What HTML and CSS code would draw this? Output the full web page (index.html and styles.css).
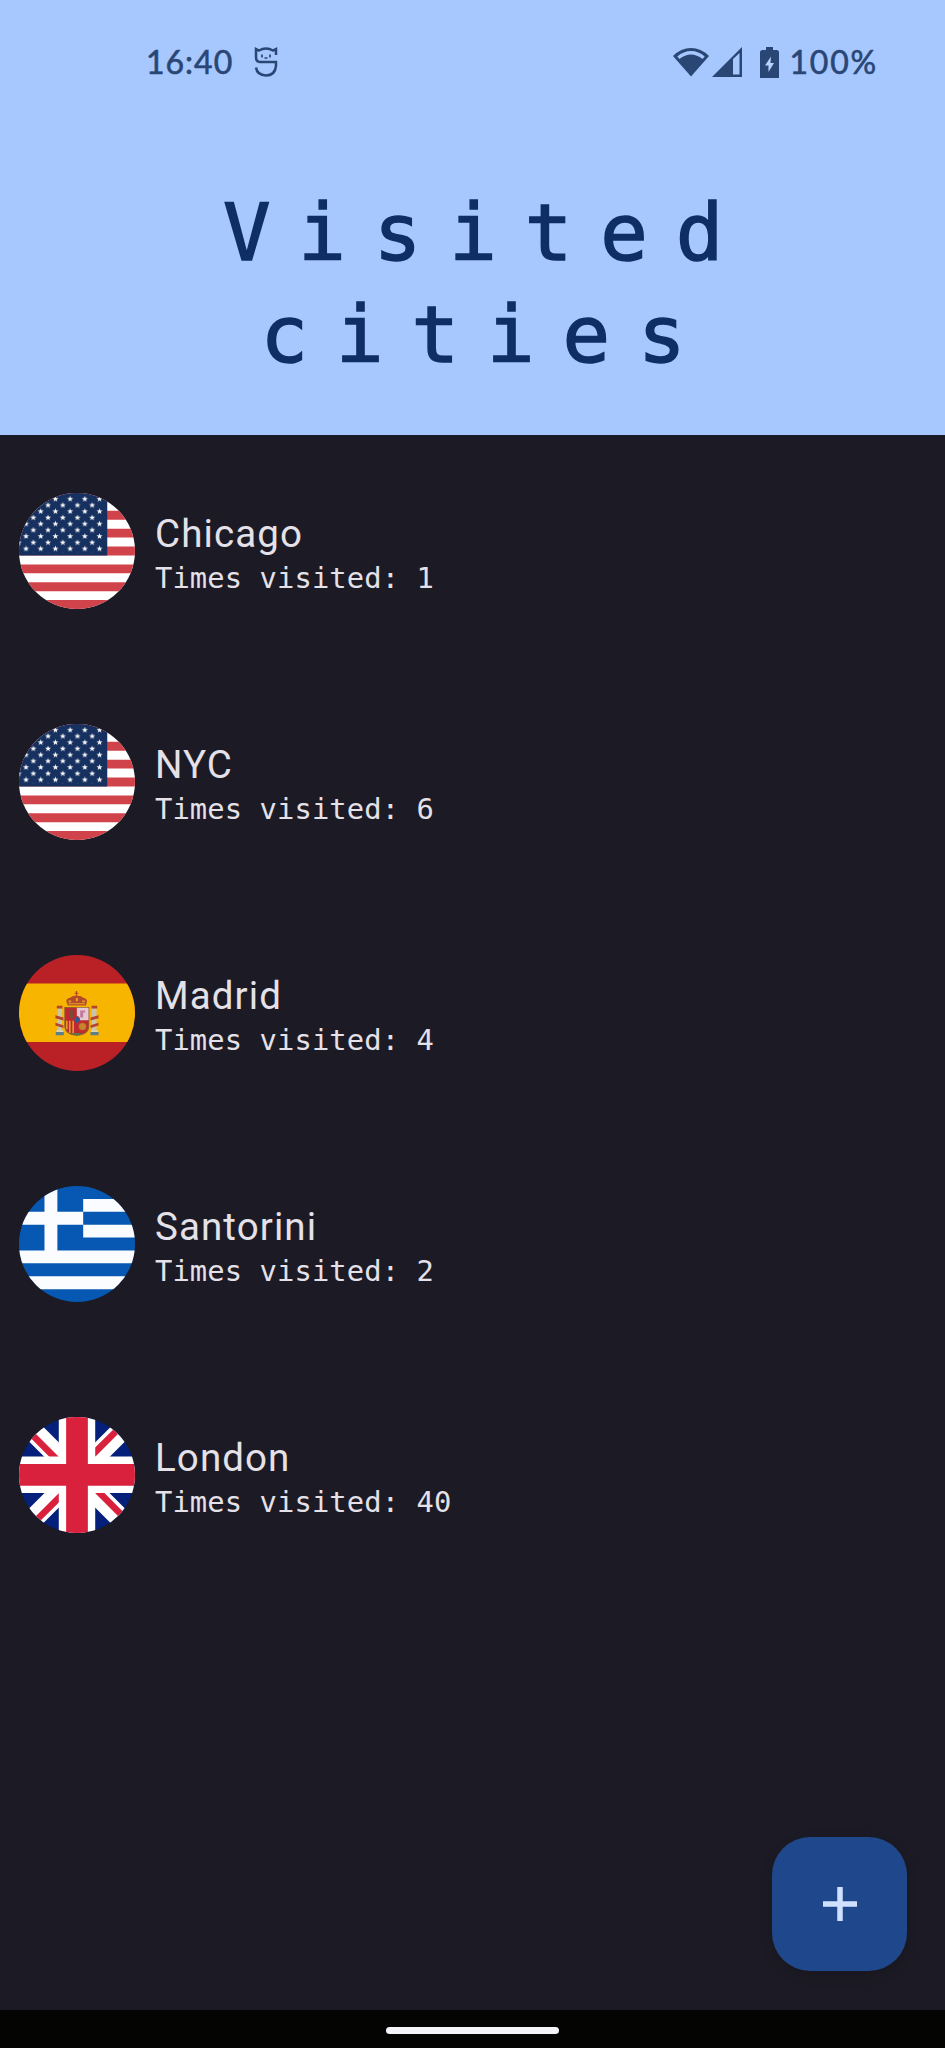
FILE: index.html
```html
<!DOCTYPE html>
<html lang="en">
<head>
<meta charset="utf-8">
<title>Visited cities</title>
<link rel="stylesheet" href="styles.css">
</head>
<body>
<svg width="0" height="0" class="defs" aria-hidden="true">
  <defs>
    <clipPath id="round"><circle cx="173.5" cy="173.5" r="173.5"/></clipPath>
    <path id="star" d="M0-9.500 2.300-3.100 9-3 3.700 1.200 5.600 7.800 0 3.900-5.600 7.800-3.700 1.200-9-3-2.300-3.100Z" fill="#fff"/>
    <pattern id="stars" width="44" height="37.2" x="-1" y="8.7" patternUnits="userSpaceOnUse">
      <use href="#star" x="22" y="9.3"/>
      <use href="#star" x="0" y="27.9"/>
      <use href="#star" x="44" y="27.9"/>
    </pattern>
    <symbol id="usa" viewBox="0 0 347 347">
      <g clip-path="url(#round)">
        <path fill="#fff" d="M0 0h347v347H0z"/>
        <path stroke="#d1434b" stroke-width="26.7" d="M0 13.3h347M0 66.700h347M0 120.100h347M0 173.500h347M0 226.900h347M0 280.300h347M0 333.700h347"/>
        <path fill="#16305f" d="M0 0h264v186.900H0z"/>
        <path fill="url(#stars)" d="M0 8h252v169H0z"/>
      </g>
    </symbol>
  </defs>
</svg>
<div class="screen">
  <header class="header">
    <div class="status">
      <div class="status-left">
        <span class="clock">16:40</span>
        <svg class="app-icon" viewBox="0 0 24 32" fill="none" stroke="#294674" stroke-width="2.500">
          <path d="M22 9V3L19 4.500Q12 0.500 5 4.500L2 3V11Q2 16 6 16H22V20Q21 29.500 12 29.500Q3 29 2 21.500"/>
          <path d="M8 8.500v3M16 8.500v3M10.500 12h3" stroke-width="1.700"/>
        </svg>
      </div>
      <div class="status-right">
        <svg class="wifi" viewBox="0 0 36 30">
          <path fill="#294674" d="M18 29.500 0 9Q8 1 18 1T36 9Z"/>
          <path fill="#a7c7ff" d="M4.300 9.500Q10.500 4 18 4T31.700 9.500L29.500 12Q24 7.500 18 7.500T6.500 12Z"/>
        </svg>
        <svg class="signal" viewBox="0 0 30 30">
          <path fill="#294674" fill-rule="evenodd" d="M0 30 30 0V30ZM21 12V27.500H27.500V6Z"/>
        </svg>
        <svg class="battery" viewBox="0 0 19 31">
          <path fill="#294674" d="M6 0h7v3h3.500Q19 3 19 5.500V31H0V5.500Q0 3 2.500 3H6Z"/>
          <path fill="#b9d2ff" d="M11 9.500 5 18.500h3.500V25L14 16h-3.500Z"/>
        </svg>
        <span class="percent">100%</span>
      </div>
    </div>
    <h1 class="title">Visited<br>cities</h1>
  </header>

  <main class="list">
    <article class="city">
      <svg class="flag"><use href="#usa"/></svg>
      <div class="info"><h2 class="name">Chicago</h2><p class="visits">Times visited: 1</p></div>
    </article>
    <article class="city">
      <svg class="flag"><use href="#usa"/></svg>
      <div class="info"><h2 class="name">NYC</h2><p class="visits">Times visited: 6</p></div>
    </article>
    <article class="city">
      <svg class="flag" viewBox="0 0 347 347">
        <g clip-path="url(#round)">
          <path fill="#b92126" d="M0 0h347v347H0z"/>
          <path fill="#f7b500" d="M0 85h347v175H0z"/>
          <!-- pillars -->
          <path fill="#c9c4ac" d="M115 160h14v70h-14zM218 160h14v70h-14z"/>
          <path fill="#b4442e" d="M113 152h17v8h-17zM217 152h17v8h-17zM109 180l24 7v9l-24-7zM238 180l-24 7v9l24-7zM109 203l24 7v8l-24-7zM238 203l-24 7v8l24-7z"/>
          <path fill="#5c7f8c" d="M110 230h24v10h-24zM214 230h24v10h-24z"/>
          <path fill="#d9d3b8" d="M112 225h20v5h-20zM216 225h20v5h-20z"/>
          <!-- crown -->
          <path fill="#b54a29" d="M146 151q-12-20 7-23 7-7 17-6v-6h-4v-3h4v-5h4v5h4v3h-4v6q12-1 18 6 18 3 8 23z"/>
          <path fill="#e5a329" d="M148 136h8v5h-8zM170 129h6v9h-6zM189 136h8v5h-8zM148 144h49v3h-49z"/>
          <!-- shield -->
          <path fill="#bd2832" stroke="#96602c" stroke-width="3" d="M137 157h72v54q0 27-36 29-36-2-36-29z"/>
          <path fill="#e2cbd1" d="M173 158h35v37h-35z"/>
          <path fill="#c477a0" d="M183 166h15v6h-6v15h-9z"/>
          <path stroke="#e09a2a" stroke-width="5" d="M143 197v25M152 197v36M162 197v38"/>
          <path fill="#7b4c35" d="M150 164h12v25h-12z"/>
          <circle cx="190" cy="214" r="13" fill="#c4862b" stroke="#bf342d" stroke-width="5"/>
          <path fill="#3f8753" d="M155 234h36l-18 7z"/>
          <ellipse cx="173" cy="194" rx="8" ry="10" fill="#275c99" stroke="#b82e38" stroke-width="3"/>
        </g>
      </svg>
      <div class="info"><h2 class="name">Madrid</h2><p class="visits">Times visited: 4</p></div>
    </article>
    <article class="city">
      <svg class="flag" viewBox="0 0 347 347">
        <g clip-path="url(#round)">
          <path fill="#0758b2" d="M0 0h347v347H0z"/>
          <path stroke="#fbfcff" stroke-width="38.600" d="M192 57.900h155M192 135h155M0 212h347M0 289.200h347M0 96.400h192M95.500 0v193"/>
        </g>
      </svg>
      <div class="info"><h2 class="name">Santorini</h2><p class="visits">Times visited: 2</p></div>
    </article>
    <article class="city">
      <svg class="flag" viewBox="0 0 347 347">
        <g clip-path="url(#round)">
          <path fill="#04207a" d="M0 0h347v347H0z"/>
          <path stroke="#fff" stroke-width="61" d="M0 0 347 347M347 0 0 347"/>
          <path fill="#d9203c" d="M0 0 173.500 173.500H145L0 28ZM347 0 173.500 173.500V145L320 0ZM347 347 173.500 173.500H202L347 319ZM0 347 173.500 173.500V202L27 347Z"/>
          <path stroke="#fff" stroke-width="109" d="M0 173H347M173.500 0V347"/>
          <path stroke="#d9203c" stroke-width="65" d="M0 173H347M173.500 0V347"/>
        </g>
      </svg>
      <div class="info"><h2 class="name">London</h2><p class="visits">Times visited: 40</p></div>
    </article>
  </main>

  <div class="actions">
    <button class="fab" aria-label="Add city">
      <svg class="plus" viewBox="0 0 34 34"><path stroke="#d0e1ff" stroke-width="5.500" d="M17 0v34M0 17h34"/></svg>
    </button>
  </div>
  <footer class="navbar"><div class="handle"></div></footer>
</div>
</body>
</html>
```
FILE: styles.css
```css
* { box-sizing: border-box; }
body { margin: 0; background: #1c1b25; }
.defs { display: block; height: 0; }
.screen { width: 945px; height: 2048px; display: flex; flex-direction: column; background: #1c1b25; overflow: hidden; }
.header { height: 435px; flex: none; background: #a7c7ff; color: #0f2e66; }
.status { height: 124px; padding: 0 67px 0 146px; display: flex; justify-content: space-between; align-items: center; font: 400 32px/40px Lato, sans-serif; color: #294674; -webkit-text-stroke: 0.600px #294674; }
.status-left, .status-right { display: flex; align-items: center; }
.clock { letter-spacing: 1px; }
.app-icon { width: 24px; height: 32px; margin-left: 21px; }
.wifi { width: 36px; height: 30px; }
.signal { width: 30px; height: 30px; margin-left: 3px; }
.battery { width: 19px; height: 31px; margin: 0 10px 0 18px; }
.percent { letter-spacing: 1.800px; }
.title { margin: 0; padding: 59px 0 0 29px; text-align: center; font: 400 79px/101.500px "DejaVu Sans Mono", monospace; letter-spacing: 27.900px; -webkit-text-stroke: 1.500px #0f2e66; }
.list { flex: 1; }
.city { height: 231px; padding-left: 19px; display: flex; align-items: center; gap: 20px; }
.flag { width: 116px; height: 116px; flex: none; }
.info { padding-top: 8px; color: #e5e1e9; }
.name { margin: 0; font: 400 38.500px/46px Roboto, sans-serif; letter-spacing: 1.100px; }
.visits { margin: 0; font: 400 28.800px/42px "DejaVu Sans Mono", monospace; letter-spacing: 0.100px; }
.actions { display: flex; justify-content: flex-end; padding: 0 38px 39px; }
.fab { width: 135px; height: 134px; padding: 0; border: 0; border-radius: 38px; background: #1f478b; display: flex; align-items: center; justify-content: center; box-shadow: 0 4px 12px rgba(0, 0, 0, 0.15); }
.plus { width: 34px; height: 34px; }
.navbar { height: 38px; flex: none; background: #040402; display: flex; justify-content: center; padding-top: 17px; }
.handle { width: 173px; height: 7px; border-radius: 4px; background: #f5f4f8; }
```
